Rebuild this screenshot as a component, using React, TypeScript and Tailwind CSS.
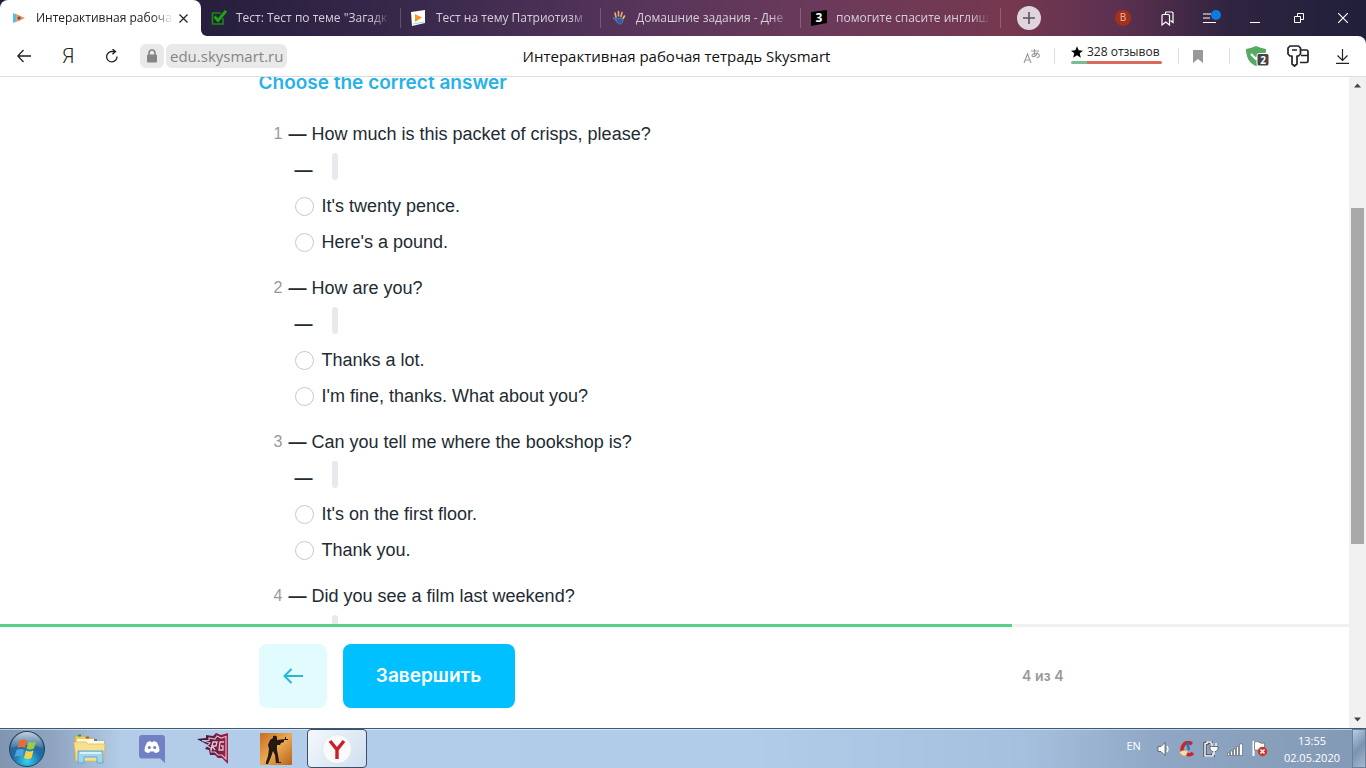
import { useState, type ReactNode } from 'react'

type Question = {
  id: number
  text: string
  options: string[]
}

const questions: Question[] = [
  { id: 1, text: 'How much is this packet of crisps, please?', options: ["It's twenty pence.", "Here's a pound."] },
  { id: 2, text: 'How are you?', options: ['Thanks a lot.', "I'm fine, thanks. What about you?"] },
  { id: 3, text: 'Can you tell me where the bookshop is?', options: ["It's on the first floor.", 'Thank you.'] },
  { id: 4, text: 'Did you see a film last weekend?', options: [] },
]

function SkysmartIcon() {
  return (
    <svg width="14" height="14" viewBox="0 0 14 14">
      <path d="M1 2l6 2.500v5L1 12z" fill="#5db7ea" />
      <path d="M4 3l6 3-6 5z" fill="#f2a33a" />
      <path d="M6 4l7 3-7 3.500z" fill="#f0925a" />
      <circle cx="7" cy="7" r="1.600" fill="#3b57a5" />
    </svg>
  )
}

function CheckIcon() {
  return (
    <svg width="16" height="16" viewBox="0 0 16 16" fill="none">
      <path d="M12 8v6H1.500V3H10" stroke="#178a12" strokeWidth="1.600" />
      <path d="M3.500 6.500l3.500 4L15 1" stroke="#1fa514" strokeWidth="2.800" />
    </svg>
  )
}

function PlayIcon() {
  return (
    <svg width="15" height="16" viewBox="0 0 15 16">
      <path d="M0 2L14 0v13L1 16z" fill="#fff" />
      <path d="M4 4l7 3.500L4 12z" fill="#f29a1f" />
      <path d="M2 14l11-2" stroke="#9fd2ee" />
    </svg>
  )
}

function HandIcon() {
  return (
    <svg width="14" height="16" viewBox="0 0 14 16" fill="none" strokeLinecap="round">
      <path d="M4 7L3 3M6.500 6V1.500M9 6.500l1-4" stroke="#e8b070" strokeWidth="1.600" />
      <path d="M11 8.500l1.500-2.500" stroke="#efc34e" strokeWidth="1.600" />
      <path d="M1.500 8c1.500 0 2 2 3 2.500" stroke="#4b7fc0" strokeWidth="1.600" />
      <path d="M4 9q3-2 7 0c0 7-6.500 6.500-7 0z" fill="#3a5796" stroke="#4b7fc0" />
    </svg>
  )
}

function ZnanijaIcon() {
  return (
    <svg width="16" height="16" viewBox="0 0 16 16">
      <path d="M0 2l16-2v13L0 16z" fill="#000" />
      <text x="8" y="12" textAnchor="middle" fontSize="12" fontWeight="700" fontFamily="Open Sans, sans-serif" fill="#fff">
        3
      </text>
    </svg>
  )
}

const tabs: { title: string; icon: ReactNode }[] = [
  { title: 'Тест: Тест по теме "Загадк', icon: <CheckIcon /> },
  { title: 'Тест на тему Патриотизм', icon: <PlayIcon /> },
  { title: 'Домашние задания - Дне', icon: <HandIcon /> },
  { title: 'помогите спасите инглиш', icon: <ZnanijaIcon /> },
]

function TabStrip() {
  return (
    <div className="flex h-9 shrink-0 bg-[linear-gradient(90deg,#1d1a31_0%,#2a2040_18%,#3b2a4d_32%,#56345a_46%,#6b3a5a_60%,#75384f_74%,#5c3050_82%,#2f2440_90%,#20203a_100%)] text-xs">
      <div className="relative flex w-[201px] shrink-0 items-center rounded-t-lg bg-white pr-2 pl-3 text-[#222]">
        <SkysmartIcon />
        <span className="ml-[10px] flex-1 overflow-hidden whitespace-nowrap [mask-image:linear-gradient(90deg,#000_85%,transparent)]">
          Интерактивная рабоча
        </span>
        <button aria-label="Закрыть вкладку" className="flex size-5 items-center justify-center">
          <svg width="9" height="9" viewBox="0 0 9 9" stroke="#222" strokeWidth="1.200">
            <path d="M0.500 0.500l8 8M8.500 0.500l-8 8" />
          </svg>
        </button>
        <svg className="absolute bottom-0 left-full" width="6" height="6" viewBox="0 0 6 6">
          <path d="M0 0v6h6A6 6 0 0 1 0 0z" fill="#fff" />
        </svg>
      </div>
      {tabs.map((t) => (
        <button key={t.title} className="flex w-[200px] shrink-0 items-center py-2 text-left text-[#d6cfdb]">
          <span className="flex w-[35px] shrink-0 justify-center">{t.icon}</span>
          <span className="mr-[10px] flex-1 overflow-hidden whitespace-nowrap [mask-image:linear-gradient(90deg,#000_88%,transparent)]">
            {t.title}
          </span>
          <span className="h-5 w-px bg-white/20" />
        </button>
      ))}
      <button aria-label="Новая вкладка" className="ml-4 flex size-6 shrink-0 items-center justify-center self-center rounded-full bg-[#e0d5dd]">
        <svg width="12" height="12" viewBox="0 0 12 12" stroke="#555" strokeWidth="1.600">
          <path d="M6 0v12M0 6h12" />
        </svg>
      </button>
      <div className="ml-auto flex pr-px">
        <button className="flex w-11 items-center justify-center">
          <span className="flex size-4 items-center justify-center rounded-full bg-[#a3301a] text-[10px] text-[#e8b9a8]">В</span>
        </button>
        <button aria-label="Закладки" className="flex w-11 items-center justify-center">
          <svg width="13" height="15" viewBox="0 0 13 15" fill="none" stroke="#fff" strokeWidth="1.200">
            <path d="M1 4.500q0-1 1-1h5.500q1 0 1 1V14L4.750 11 1 14z" />
            <path d="M4.500 3.500V2q0-1 1-1H11q1 0 1 1v9.500l-2.500-2" />
          </svg>
        </button>
        <button aria-label="Меню" className="flex w-11 items-center justify-center">
          <svg width="20" height="16" viewBox="0 0 20 16">
            <path d="M2 4h8M2 8h7M2 12.500h13" stroke="#fff" strokeWidth="1.200" />
            <circle cx="15" cy="5" r="5" fill="#0b7de0" />
          </svg>
        </button>
        <button aria-label="Свернуть" className="flex w-11 items-center justify-center">
          <svg width="10" height="10" viewBox="0 0 10 10">
            <path d="M0 9.500h10" stroke="#fff" />
          </svg>
        </button>
        <button aria-label="Окно" className="flex w-11 items-center justify-center">
          <svg width="10" height="10" viewBox="0 0 10 10" fill="none" stroke="#fff">
            <path d="M0.500 3.500h6v6h-6zM3.500 3.500v-3h6v6h-3" />
          </svg>
        </button>
        <button aria-label="Закрыть" className="flex w-11 items-center justify-center">
          <svg width="10" height="10" viewBox="0 0 10 10" stroke="#fff" strokeWidth="1.200">
            <path d="M0 0l10 10M10 0L0 10" />
          </svg>
        </button>
      </div>
    </div>
  )
}

function AddressBar() {
  return (
    <div className="bg-[#20203a]">
      <div className="flex h-[41px] items-center rounded-tr-lg border-b border-[#dedede] bg-white pl-[2px]">
        <button aria-label="Назад" className="flex w-11 justify-center">
          <svg width="14" height="14" viewBox="0 0 14 14" fill="none" stroke="#222" strokeWidth="1.300">
            <path d="M14 7H1M6.500 1L0.800 7l5.700 6" />
          </svg>
        </button>
        <button className="flex w-11 justify-center font-['Roboto',sans-serif] text-xl leading-6 font-light text-[#222]">Я</button>
        <button aria-label="Обновить" className="flex w-11 justify-center">
          <svg width="14" height="15" viewBox="0 0 14 15" fill="none" stroke="#222" strokeWidth="1.300">
            <path d="M12 7.500a5.200 5.200 0 1 1-5-5h3M7.500 0l3 2.600-3 2.700" />
          </svg>
        </button>
        <button aria-label="Сведения о сайте" className="ml-[6px] flex h-6 w-6 items-center justify-center rounded-md bg-[#e9e9e9]">
          <svg width="12" height="14" viewBox="0 0 12 14">
            <rect x="1" y="5.500" width="10" height="8" rx="1" fill="#858585" />
            <path d="M3 6V4a3 3 0 0 1 6 0v2" fill="none" stroke="#858585" strokeWidth="1.600" />
          </svg>
        </button>
        <input
          aria-label="Адрес"
          defaultValue="edu.skysmart.ru"
          className="ml-[2px] h-6 w-[121px] rounded-md bg-[#e9e9e9] px-1 text-[15px] text-[#858585] outline-none"
        />
        <div className="flex-1 pl-12 text-center text-[15px] text-[#111]">Интерактивная рабочая тетрадь Skysmart</div>
        <button aria-label="Перевести" className="flex w-7 justify-center text-[#999]">
          <svg width="18" height="16" viewBox="0 0 18 16" fill="none" stroke="#999" strokeWidth="1.100">
            <path d="M1 15L4.500 6 8 15M2.200 12h4.600" />
            <path d="M8 3h8M11.500 1c-0.500 3 0 5 0.500 7M14.500 4.500c-1 3-3 4.500-5 4-1.500-1 0.500-3.500 4-3.200 4 0.200 3.500 4.200 0 4.700" />
          </svg>
        </button>
        <span className="ml-2 h-4 w-px bg-[#ddd]" />
        <a href="#reviews" className="ml-4 flex w-[91px] flex-col pb-[6px] text-xs leading-[18px] text-[#222]">
          <span className="flex items-center gap-1 whitespace-nowrap">
            <svg width="12" height="12" viewBox="0 0 22 21" className="shrink-0">
              <path d="M11 0l3 7.500 8 0.500-6 5 2 8-7-4.500L4 21l2-8-6-5 8-0.500z" fill="#000" />
            </svg>
            328 отзывов
          </span>
          <span className="flex h-[3px] overflow-hidden rounded-sm">
            <span className="w-4 bg-[#77bf90]" />
            <span className="flex-1 bg-[#d96a5c]" />
          </span>
        </a>
        <span className="ml-4 h-4 w-px bg-[#ddd]" />
        <button aria-label="В закладки" className="ml-[14px]">
          <svg width="10" height="13" viewBox="0 0 10 13">
            <path d="M0 0h10v13L5 9l-5 4z" fill="#999" />
          </svg>
        </button>
        <span className="ml-[26px] h-4 w-px bg-[#ddd]" />
        <button aria-label="Защита" className="ml-4">
          <svg width="23" height="21" viewBox="0 0 23 21">
            <path d="M0 3Q6 2 10 0q4 2 10 3c0 8-3 14-10 17C3 17 0 11 0 3z" fill="#56ab63" />
            <path d="M5 8l5 5 5-5" fill="none" stroke="#fff" strokeWidth="2.200" />
            <rect x="11" y="7.500" width="12" height="12.500" rx="2" fill="#454545" stroke="#fff" />
            <text x="17" y="17.500" textAnchor="middle" fontSize="10" fontWeight="700" fontFamily="Open Sans, sans-serif" fill="#fff">
              2
            </text>
          </svg>
        </button>
        <button aria-label="Пароли" className="ml-[18px]">
          <svg width="22" height="22" viewBox="0 0 22 22" fill="none" stroke="#222" strokeWidth="1.700" strokeLinejoin="round">
            <path d="M3 1h8.500l2 2v6l-2 2H10v8l-2.500 2L5 19v-8H3L1 9V3z" />
            <path d="M5 5h5" strokeWidth="1.500" />
            <path d="M14 5h5.500q1.500 0 1.500 1.500V16q0 1.500-1.500 1.500H13M14 10.500h7" />
          </svg>
        </button>
        <button aria-label="Загрузки" className="mr-[17px] ml-[27px]">
          <svg width="13" height="15" viewBox="0 0 13 15" fill="none" stroke="#222" strokeWidth="1.200">
            <path d="M6.500 0v11M1.500 6.500l5 5 5-5M0 14.400h13" />
          </svg>
        </button>
      </div>
    </div>
  )
}

function QuestionItem({ question }: { question: Question }) {
  const [answer, setAnswer] = useState('')

  return (
    <li className="mb-[10px] text-lg leading-9 text-[#222b33]">
      <div className="flex">
        <span className="w-[30px] pl-[15px] text-base leading-9 text-[#999]">{question.id}</span>
        <span>
          <b>—</b> {question.text}
        </span>
      </div>
      <div className="flex h-9 items-start pl-9">
        <b className="w-[37px]">—</b>
        <span className="mt-px flex h-[27px] min-w-[6px] items-center rounded-sm bg-[#e8e9ec]">{answer}</span>
      </div>
      {question.options.map((option) => (
        <label key={option} className="flex h-9 items-center pl-9">
          <input
            type="radio"
            name={`question-${question.id}`}
            checked={answer === option}
            onChange={() => setAnswer(option)}
            className="mr-2 size-[19px] appearance-none rounded-full border border-[#c9c9c9] bg-white checked:border-[6px] checked:border-[#00c0ff]"
          />
          {option}
        </label>
      ))}
    </li>
  )
}

function Scrollbar() {
  return (
    <div className="flex w-[17px] shrink-0 flex-col items-center bg-[#f1f1f1]">
      <svg width="17" height="17" viewBox="0 0 17 17" className="shrink-0">
        <path d="M5 10.500L8.500 6.500 12 10.500z" fill="#444" />
      </svg>
      <div className="flex min-h-0 w-full flex-1 flex-col items-center">
        <div className="h-[18.500%]" />
        <div className="h-[54.500%] w-[13px] bg-[#a9a9a9]" />
      </div>
      <svg width="17" height="17" viewBox="0 0 17 17" className="shrink-0">
        <path d="M5 6.500l3.500 4 3.500-4z" fill="#444" />
      </svg>
    </div>
  )
}

function StartOrb() {
  return (
    <svg width="38" height="38" viewBox="0 0 38 38">
      <defs>
        <radialGradient id="orb" cx="50%" cy="85%" r="80%">
          <stop offset="0" stopColor="#35d3ee" />
          <stop offset="0.500" stopColor="#1d6ea5" />
          <stop offset="1" stopColor="#3a5f86" />
        </radialGradient>
        <linearGradient id="shine" x1="0" y1="0" x2="0" y2="1">
          <stop offset="0" stopColor="#fff" stopOpacity="0.700" />
          <stop offset="1" stopColor="#fff" stopOpacity="0.100" />
        </linearGradient>
      </defs>
      <circle cx="19" cy="19" r="17.500" fill="url(#orb)" stroke="#1d4567" />
      <path d="M3 18a16 16 0 0 1 32 0q-16-6-32 0z" fill="url(#shine)" />
      <path d="M11.500 10.500q4-2 7.500 0l-2 7.500q-3.500-2-7.500 0z" fill="#ee6a35" />
      <path d="M20.500 11.500q3.500 2 7.500 0l-2 7q-4 2-7.500 0z" fill="#9ccb47" />
      <path d="M8.500 20q4-2 7.500 0l-2 7q-3.500-2-7.500 0z" fill="#4fa3e3" />
      <path d="M18 20.500q3.500 2 7.500 0l-2 7.500q-4 2-7.500 0z" fill="#fbd044" />
    </svg>
  )
}

function ExplorerIcon() {
  return (
    <svg width="34" height="30" viewBox="0 0 34 30">
      <path d="M2 2h9l2 2h8v3h10v19H2z" fill="#eacb69" stroke="#c5a446" strokeWidth="0.700" />
      <path d="M4 5h17l2 2h8v18H4z" fill="#fff8dc" />
      <path d="M1 8h12l2 2h17l-1 17H3z" fill="#f7e08d" stroke="#d8b75a" strokeWidth="0.700" />
      <path d="M5 1.500h3" stroke="#1fa33a" strokeWidth="2" />
      <path d="M13 3.500h3" stroke="#b3592a" strokeWidth="2" />
      <path d="M21 6h3" stroke="#3a8bcb" strokeWidth="2" />
      <path d="M5 29V17h25v12h-6v-6H11v6z" fill="#9ed6f0" stroke="#5ba9d5" />
      <path d="M7 19h21" stroke="#d8f1fb" strokeWidth="2" />
    </svg>
  )
}

function DiscordIcon() {
  return (
    <svg width="26" height="28" viewBox="0 0 26 28">
      <path d="M3 0h20a3 3 0 0 1 3 3v25l-5-4.500H3a3 3 0 0 1-3-3V3a3 3 0 0 1 3-3z" fill="#7281c4" />
      <path
        d="M8 7.500q2-1.500 3.500-1.500l0.500 1h2l0.500-1q1.500 0 3.500 1.500 2.500 4 2.500 8.500-1.500 2-4.500 2l-1-1.500h-4L10 18q-3 0-4.500-2Q5.500 11.500 8 7.500z"
        fill="#fff"
      />
      <circle cx="10.300" cy="12.500" r="1.600" fill="#7281c4" />
      <circle cx="15.700" cy="12.500" r="1.600" fill="#7281c4" />
    </svg>
  )
}

function RgIcon() {
  return (
    <svg width="34" height="32" viewBox="0 0 34 32" fill="none">
      <defs>
        <linearGradient id="rg" x1="0" y1="0" x2="1" y2="0">
          <stop offset="0" stopColor="#1e1b45" />
          <stop offset="1" stopColor="#a51f45" />
        </linearGradient>
      </defs>
      <path d="M0 6l9-1V2l7 1 3-3 5 2 7-2v31l-6-6h-4l-3-3h-5l-1-5-4-1 3-4z" fill="url(#rg)" />
      <path d="M5 7.500h7V5l6 1 2-3 4 2 5-1.500V26l-4-4h-4l-3-3h-4v-4l-4-2 3-3z" stroke="#d8bac8" strokeWidth="1.200" />
      <path d="M14 17l2-8h4l-1 4h-4l3 4M27 9h-4l-1 8h4v-4h-2" stroke="#e6c3d0" strokeWidth="1.300" />
    </svg>
  )
}

function CsgoIcon() {
  return (
    <svg width="32" height="32" viewBox="0 0 32 32">
      <defs>
        <linearGradient id="cs" x1="0" y1="0" x2="1" y2="1">
          <stop offset="0" stopColor="#c76b22" />
          <stop offset="0.500" stopColor="#eba952" />
          <stop offset="1" stopColor="#b76119" />
        </linearGradient>
      </defs>
      <rect width="32" height="32" rx="1" fill="url(#cs)" />
      <path
        d="M13 3q3-1 4 1v3l8-1V4h1v2h2v1h-4v2l-3 1-1 2h-3v5l1 5 1 7h2v1h-5l-1-8-2-4-2 6-3 7H6v-2l2-6 1-7-1-4 2-5 3-2z"
        fill="#231b13"
      />
    </svg>
  )
}

function YandexIcon() {
  return (
    <svg width="30" height="30" viewBox="0 0 30 30">
      <circle cx="15" cy="15" r="14.500" fill="#fafafa" stroke="#d8dfe6" strokeWidth="0.700" />
      <path d="M8 7l7 8.500L22 7M15 15v10" fill="none" stroke="#cc1e26" strokeWidth="3.400" />
    </svg>
  )
}

function TrayIcons() {
  return (
    <div className="flex items-center gap-2">
      <svg width="14" height="16" viewBox="0 0 14 16">
        <path d="M1 5.500h3L8 1.500v13l-4-4H1z" fill="#fff" stroke="#444" strokeWidth="0.700" />
        <path d="M10 5q2 3 0 6" fill="none" stroke="#fff" strokeWidth="1.200" />
      </svg>
      <svg width="16" height="16" viewBox="0 0 16 16" fill="none">
        <path d="M13 3Q7-1 4 5t3 8q4 2 7-1" stroke="#c9252b" strokeWidth="3.500" />
        <path d="M8 1l2 8" stroke="#2670b5" strokeWidth="2.500" />
        <path d="M0 11q5-3 9-1l-2 5q-4 1-7-4z" fill="#f1dfb4" stroke="#b98b4b" strokeWidth="0.500" />
      </svg>
      <svg width="16" height="16" viewBox="0 0 16 16" fill="none">
        <path d="M8 2.500V1H4v1.500H2V15h8v-3" stroke="#333" strokeWidth="3" />
        <path d="M8 2.500V1H4v1.500H2V15h8v-3" stroke="#fff" strokeWidth="1.500" />
        <path d="M7 5.500h8v2.500l-2 2.500H9L7 8z" fill="#fff" stroke="#333" strokeWidth="0.600" />
        <path d="M9 5V2M13 5V2M11 10v4" stroke="#fff" strokeWidth="1.300" />
      </svg>
      <svg width="16" height="16" viewBox="0 0 16 16" fill="#fff" stroke="#444" strokeWidth="0.500">
        <path d="M0.500 12h2v2.500h-2zM3.500 10h2v4.500h-2zM6.500 8h2v6.500h-2zM9.500 5.500h2v9h-2zM12.500 3h3v11.500h-3z" />
      </svg>
      <svg width="17" height="17" viewBox="0 0 17 17">
        <path d="M2.500 1v15" stroke="#fff" strokeWidth="2" />
        <path d="M3.500 2q3-1 5 0.500t5 0.500v7H3.500z" fill="#fff" stroke="#555" strokeWidth="0.600" />
        <circle cx="11.500" cy="11.500" r="4.700" fill="#cf3428" />
        <path d="M9.500 9.500l4 4M13.500 9.500l-4 4" stroke="#fff" strokeWidth="1.500" />
      </svg>
    </div>
  )
}

function Taskbar() {
  return (
    <div className="flex h-10 shrink-0 border-t border-[#3f5877] bg-[linear-gradient(90deg,#8095b0_0%,#8fa5c1_4%,#b3cde9_9%,#b0cce9_55%,#a5c0de_75%,#8fa7c4_85%,#8299b5_100%)] shadow-[inset_0_1px_0_rgba(255,255,255,0.5)]">
      <button aria-label="Пуск" className="flex w-[54px] items-center justify-center">
        <StartOrb />
      </button>
      <button aria-label="Проводник" className="ml-[5px] flex w-[62px] items-center justify-center">
        <ExplorerIcon />
      </button>
      <button aria-label="Discord" className="flex w-[62px] items-center justify-center">
        <DiscordIcon />
      </button>
      <button aria-label="RG" className="flex w-[62px] items-center justify-center">
        <RgIcon />
      </button>
      <button aria-label="CS:GO" className="flex w-[62px] items-center justify-center">
        <CsgoIcon />
      </button>
      <button
        aria-label="Яндекс"
        className="flex w-[60px] items-center justify-center rounded-sm border border-[#3d4f66] bg-[linear-gradient(135deg,#f4f8fc,#cfdfef)]"
      >
        <YandexIcon />
      </button>
      <div className="ml-auto flex items-center text-[11px] text-white">
        <span className="pb-1">EN</span>
        <div className="ml-4">
          <TrayIcons />
        </div>
        <div className="ml-4 text-center leading-[17px]">
          <div>13:55</div>
          <div>02.05.2020</div>
        </div>
        <button
          aria-label="Свернуть все окна"
          className="ml-3 h-full w-[14px] border border-[#6b8097] bg-[linear-gradient(135deg,#b9cbdf,#7b93b0_50%,#a4b9d0)]"
        />
      </div>
    </div>
  )
}

export default function App() {
  return (
    <div className="flex h-screen flex-col overflow-hidden bg-white font-['Open_Sans','Noto_Sans',sans-serif]">
      <TabStrip />
      <AddressBar />
      <div className="flex min-h-0 flex-1">
        <div className="flex min-w-0 flex-1 flex-col">
          <main className="min-h-0 flex-1 overflow-hidden">
            <div className="mx-auto -mt-2 max-w-[832px] font-['Liberation_Sans',Arial,sans-serif]">
              <h1 className="mb-[19px] font-['Inter',sans-serif] text-[19px] leading-7 font-semibold text-[#27b2e6]">
                Choose the correct answer
              </h1>
              <ol>
                {questions.map((q) => (
                  <QuestionItem key={q.id} question={q} />
                ))}
              </ol>
            </div>
          </main>
          <div className="h-[3px] shrink-0 bg-[#f0f0f0]">
            <div className="h-full w-3/4 bg-[#57d08b]" />
          </div>
          <footer className="shrink-0 pt-[17px] pb-5 font-['Inter',sans-serif]">
            <div className="mx-auto flex max-w-[832px] items-center">
              <button aria-label="Предыдущее задание" className="flex h-16 w-[68px] items-center justify-center rounded-lg bg-[#e2fbff]">
                <svg width="20" height="16" viewBox="0 0 20 16" fill="none" stroke="#26b8dc" strokeWidth="2">
                  <path d="M20 8H2M8.500 1L1.500 8l7 7" />
                </svg>
              </button>
              <button className="ml-4 h-16 w-[172px] rounded-lg bg-[#00c0ff] text-[19px] font-semibold text-white">
                Завершить
              </button>
              <span className="mr-[27px] ml-auto text-sm font-semibold text-[#999]">4 из 4</span>
            </div>
          </footer>
        </div>
        <Scrollbar />
      </div>
      <Taskbar />
    </div>
  )
}
